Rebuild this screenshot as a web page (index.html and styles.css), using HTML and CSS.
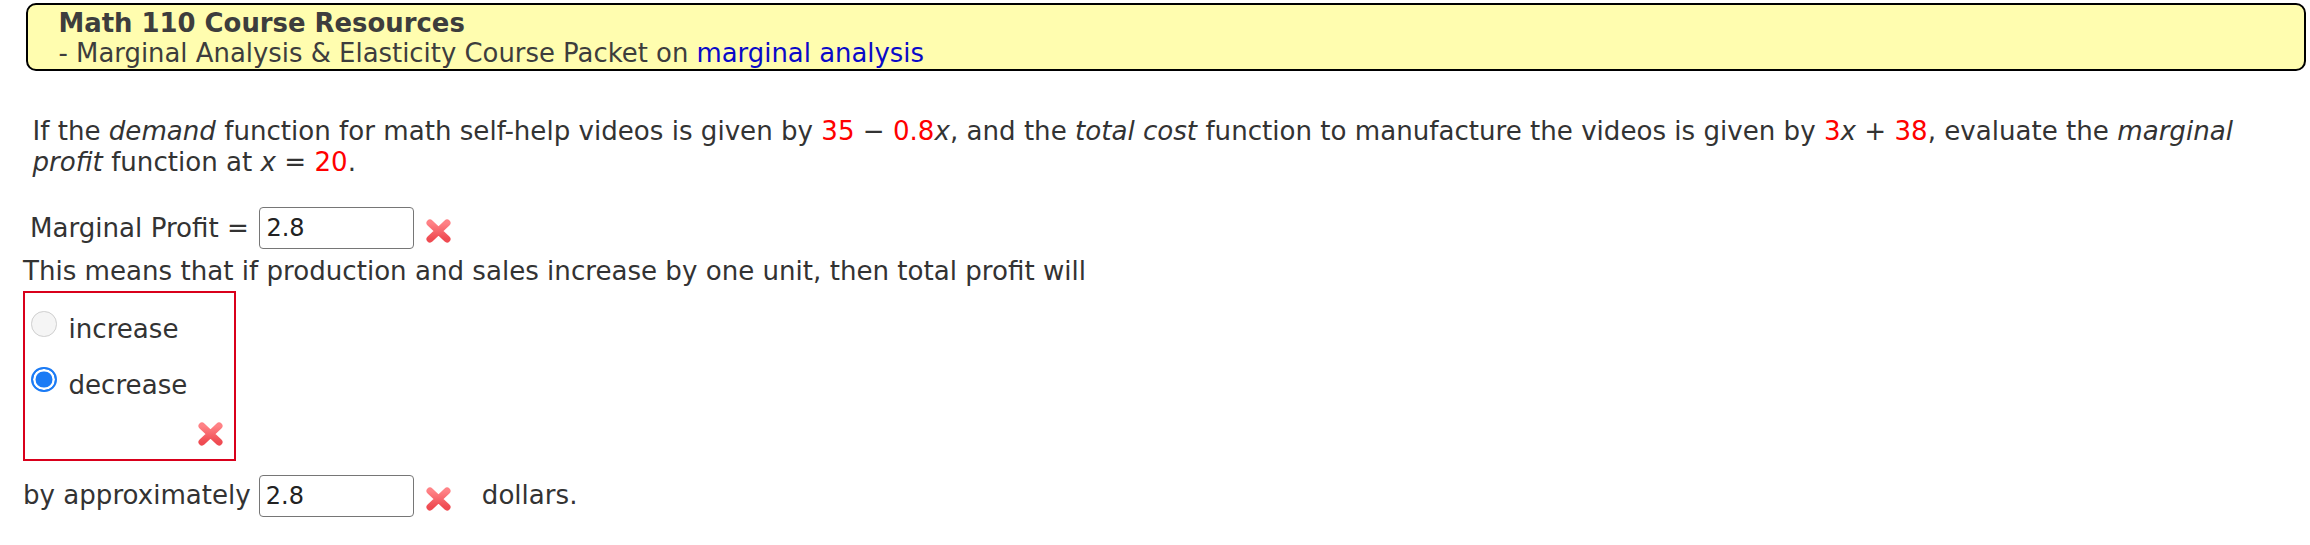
FILE: index.html
```html
<!DOCTYPE html>
<html lang="en">
<head>
<meta charset="utf-8">
<title>Marginal Analysis</title>
<link rel="stylesheet" href="styles.css">
</head>
<body>
<div class="course-header">
  <div class="course-title">Math 110 Course Resources</div>
  <div class="course-sub">- Marginal Analysis &amp; Elasticity Course Packet on <a class="course-link" href="#">marginal analysis</a></div>
</div>

<p class="question">If the <em>demand</em> function for math self-help videos is given by <span class="num">35</span> &minus; <span class="num">0.8</span><em>x</em>, and the <em>total cost</em> function to manufacture the videos is given by <span class="num">3</span><em>x</em> + <span class="num">38</span>, evaluate the <em>marginal</em> <em>profit</em> function at <em>x</em> = <span class="num">20</span>.</p>

<div class="answer-row indent">
  <span class="label">Marginal Profit =</span>
  <input class="answer" type="text" value="2.8">
  <svg class="wrong" width="27" height="26" viewBox="0 0 27 26" aria-hidden="true">
    <defs>
      <linearGradient id="xg1" x1="0" y1="0" x2="0" y2="1">
        <stop offset="0" stop-color="#ff8286"/>
        <stop offset="1" stop-color="#ef4b52"/>
      </linearGradient>
    </defs>
    <path d="M5 5 L22 21 M22 5 L5 21" stroke="url(#xg1)" stroke-width="7" stroke-linecap="round" fill="none"/>
  </svg>
</div>

<div class="sentence">This means that if production and sales increase by one unit, then total profit will</div>

<div class="choices">
  <label class="opt first"><input class="radio" type="radio" name="dir" value="increase">increase</label>
  <label class="opt second"><input class="radio" type="radio" name="dir" value="decrease" checked>decrease</label>
  <div class="choice-mark">
    <svg class="wrong-box" width="27" height="26" viewBox="0 0 27 26" aria-hidden="true">
      <defs>
        <linearGradient id="xg2" x1="0" y1="0" x2="0" y2="1">
          <stop offset="0" stop-color="#ff8286"/>
          <stop offset="1" stop-color="#ef4b52"/>
        </linearGradient>
      </defs>
      <path d="M5 5 L22 21 M22 5 L5 21" stroke="url(#xg2)" stroke-width="7" stroke-linecap="round" fill="none"/>
    </svg>
  </div>
</div>

<div class="answer-row final">
  <span class="label">by approximately</span>
  <input class="answer" type="text" value="2.8">
  <svg class="wrong" width="27" height="26" viewBox="0 0 27 26" aria-hidden="true">
    <defs>
      <linearGradient id="xg3" x1="0" y1="0" x2="0" y2="1">
        <stop offset="0" stop-color="#ff8286"/>
        <stop offset="1" stop-color="#ef4b52"/>
      </linearGradient>
    </defs>
    <path d="M5 5 L22 21 M22 5 L5 21" stroke="url(#xg3)" stroke-width="7" stroke-linecap="round" fill="none"/>
  </svg>
  <span class="unit">dollars.</span>
</div>
</body>
</html>
```

FILE: styles.css
```css
html, body {
  margin: 0;
  background: #ffffff;
}

body {
  padding: 0 0 0 23px;
  font-family: "DejaVu Sans", Verdana, sans-serif;
  font-size: 26.1px;
  color: #333333;
}

.course-header {
  margin: 3px 4px 0 3px;
  border: 2px solid #000000;
  border-radius: 10px;
  background: #fffdaf;
  padding: 3px 0 1px 30.5px;
  line-height: 30px;
  font-size: 25.9px;
}

.course-title {
  font-weight: bold;
  color: #3d3d3d;
}

.course-sub {
  color: #3d3d3d;
}

.course-link {
  color: #0a0ac8;
  text-decoration: none;
}

.question {
  margin: 44.8px 0 0 0;
  padding: 0 20px 0 9.5px;
  line-height: 30.7px;
}

.num {
  color: #ff0000;
}

.answer-row {
  display: flex;
  align-items: center;
  height: 42px;
  line-height: 30.7px;
}

.answer-row.indent {
  margin-top: 29.8px;
  padding-left: 7px;
}

.answer-row.final {
  margin-top: 13.5px;
}

.answer {
  box-sizing: border-box;
  width: 155px;
  height: 42px;
  margin: 0 0 0 10.5px;
  padding: 0 0 0 6px;
  border: 1.5px solid #767676;
  border-radius: 4px;
  background: #ffffff;
  font-family: "DejaVu Sans", Verdana, sans-serif;
  font-size: 24px;
  color: #222222;
  outline: none;
}

.answer-row.final .answer {
  margin-left: 8px;
}

.wrong {
  display: block;
  flex: none;
  margin: 6px 0 0 11px;
}

.unit {
  margin-left: 30px;
}

.sentence {
  margin-top: 6.8px;
  line-height: 30.7px;
}

.choices {
  box-sizing: border-box;
  width: 213px;
  height: 170px;
  margin: 4.5px 0 0 0;
  padding: 0 10px 0 6px;
  border: 2px solid #d9001b;
  line-height: 30.7px;
}

.opt {
  display: block;
  white-space: nowrap;
}

.opt.first {
  padding-top: 18px;
}

.opt.second {
  margin-top: 22.5px;
}

.radio {
  -webkit-appearance: none;
  appearance: none;
  box-sizing: border-box;
  display: inline-block;
  width: 25.5px;
  height: 25.5px;
  margin: 0 12px 1px 0;
  vertical-align: baseline;
  border-radius: 50%;
  border: 1.5px solid #cfcfcf;
  background: #f5f5f5;
}

.radio:checked {
  border: 2px solid #1b7bf5;
  background: #1b7bf5;
  box-shadow: inset 0 0 0 2.5px #ffffff;
}

.choice-mark {
  display: flex;
  justify-content: flex-end;
  margin-top: 21.5px;
}

.wrong-box {
  display: block;
}
```
